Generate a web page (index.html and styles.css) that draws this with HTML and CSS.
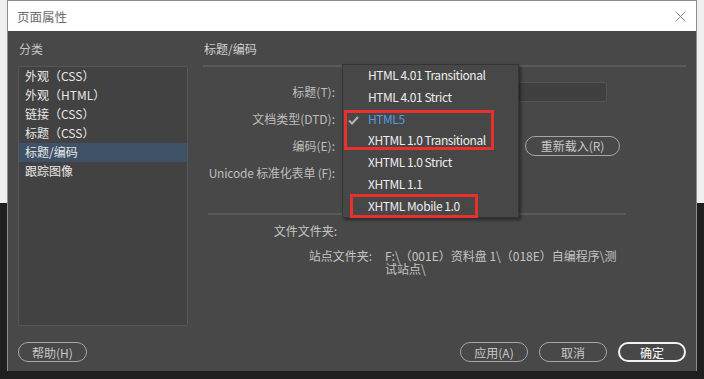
FILE: index.html
```html
<!DOCTYPE html>
<html lang="zh-CN">
<head>
    <meta charset="UTF-8">
    <title>页面属性</title>
    <link rel="stylesheet" href="styles.css">
</head>
<body>
    <div class="window">
        <div class="titlebar">
            <span>页面属性</span>
            <svg class="close" width="11" height="11" viewBox="0 0 11 11">
                <path d="M0.5 0.5 L10.5 10.5 M10.5 0.5 L0.5 10.5" stroke="#8a8a8a" stroke-width="1" fill="none"/>
            </svg>
        </div>

        <div class="dialog-body">
            <div class="main">
                <div class="category-col">
                    <div class="section-label">分类</div>
                    <ul class="category-list">
                        <li>外观（CSS）</li>
                        <li>外观（HTML）</li>
                        <li>链接（CSS）</li>
                        <li>标题（CSS）</li>
                        <li class="selected">标题/编码</li>
                        <li>跟踪图像</li>
                    </ul>
                </div>

                <div class="panel">
                    <div class="section-label header">标题/编码</div>
                    <div class="rule"></div>

                    <div class="form-grid">
                        <label>标题(T):</label>
                        <div class="field"><div class="textbox wide"></div></div>

                        <label>文档类型(DTD):</label>
                        <div class="field"><div class="textbox"></div></div>

                        <label>编码(E):</label>
                        <div class="field">
                            <div class="textbox"></div>
                            <button class="pill">重新载入(R)</button>
                        </div>

                        <label class="latin">Unicode 标准化表单 (F):</label>
                        <div class="field"><div class="textbox"></div></div>
                    </div>

                    <div class="rule short"></div>

                    <div class="info-row first">
                        <span class="info-label">文件文件夹:</span>
                    </div>
                    <div class="info-row second">
                        <span class="info-label">站点文件夹:</span>
                        <span class="info-value">F:\（001E）资料盘 1\（018E）自编程序\测试站点\</span>
                    </div>

                    <div class="dropdown">
                        <div class="dd-item">HTML 4.01 Transitional</div>
                        <div class="dd-item">HTML 4.01 Strict</div>
                        <div class="dd-item active">
                            <svg class="check" width="11" height="9" viewBox="0 0 11 9">
                                <path d="M1 4.5 L4 7.5 L10 1" stroke="#b4b4b4" stroke-width="2" fill="none"/>
                            </svg>
                            HTML5
                        </div>
                        <div class="dd-item">XHTML 1.0 Transitional</div>
                        <div class="dd-item">XHTML 1.0 Strict</div>
                        <div class="dd-item">XHTML 1.1</div>
                        <div class="dd-item">XHTML Mobile 1.0</div>
                        <div class="mark mark-a"></div>
                        <div class="mark mark-b"></div>
                    </div>
                </div>
            </div>

            <div class="footer">
                <button class="pill">帮助(H)</button>
                <div class="footer-right">
                    <button class="pill">应用(A)</button>
                    <button class="pill">取消</button>
                    <button class="pill primary">确定</button>
                </div>
            </div>
        </div>
    </div>
</body>
</html>
```

FILE: styles.css
```css
body {
    margin: 0;
    width: 704px;
    height: 379px;
    overflow: hidden;
    background: linear-gradient(#efefef 0, #efefef 203px, #1f1f1f 203px);
    font-family: "Noto Sans CJK SC", "Noto Sans", sans-serif;
    font-size: 12px;
}

.window {
    margin-left: 7px;
    width: 688px;
    height: 370px;
    border: 1px solid #8c8c8c;
    border-bottom: none;
    display: flex;
    flex-direction: column;
}

.titlebar {
    height: 30px;
    background: #fff;
    display: flex;
    align-items: center;
    justify-content: space-between;
    padding: 0 10px 0 9px;
    color: #6a6a6a;
    font-size: 12.5px;
}

.dialog-body {
    flex: 1;
    background: #484848;
    padding: 9px 10px 9px 10px;
    display: flex;
    flex-direction: column;
}

.main {
    flex: 1;
    display: grid;
    grid-template-columns: 170px 1fr;
    gap: 15px;
}

.section-label {
    line-height: 18px;
    color: #c4c4c4;
    padding-left: 1px;
}

.category-list {
    list-style: none;
    margin: 8px 0 0 0;
    padding: 0;
    height: 258px;
    border: 1px solid #565656;
    border-radius: 2px;
    background: #424242;
    color: #e8e8e8;
}

.category-list li {
    height: 19px;
    line-height: 17px;
    padding-left: 6px;
}

.category-list .selected {
    background: #3e5166;
}

.panel {
    position: relative;
}

.header {
    color: #d0d0d0;
}

.rule {
    height: 2px;
    background: #5a5a5a;
    margin-top: 7px;
}

.rule.short {
    margin: 27px 0 0 5px;
    width: 418px;
}

.form-grid {
    margin-top: 11px;
    display: grid;
    grid-template-columns: 132px 1fr;
    column-gap: 10px;
    grid-auto-rows: 27px;
    align-items: center;
}

.form-grid label {
    text-align: right;
    color: #bdbdbd;
}

.form-grid label.latin {
    letter-spacing: -0.2px;
}

.field {
    display: flex;
    align-items: center;
    gap: 10px;
}

.textbox {
    box-sizing: border-box;
    width: 170px;
    height: 20px;
    background: #404040;
    border: 1px solid #555;
    border-radius: 3px;
}

.textbox.wide {
    width: 262px;
}

.pill {
    height: 20px;
    padding: 0;
    border: 1px solid #a6a6a6;
    border-radius: 10px;
    background: transparent;
    color: #c8c8c8;
    font-family: "Noto Sans CJK SC", "Noto Sans", sans-serif;
    font-size: 12px;
    line-height: 17px;
}

.field .pill {
    width: 95px;
}

.info-row {
    display: flex;
    color: #c4c4c4;
    line-height: 14px;
}

.info-row.first {
    margin-top: 9px;
}

.info-row.second {
    margin-top: 11px;
}

.info-row.first .info-label {
    width: 134px;
    text-align: right;
}

.info-row.second .info-label {
    width: 169px;
    text-align: right;
}

.info-value {
    margin-left: 13px;
    width: 232px;
    line-height: 13px;
    word-break: break-all;
}

.dropdown {
    position: absolute;
    left: 139px;
    top: 24px;
    width: 175px;
    height: 152px;
    background: #474747;
    border: 1px solid #353535;
    box-shadow: 2px 2px 3px rgba(0, 0, 0, 0.45);
    letter-spacing: -0.45px;
}

.dd-item {
    position: relative;
    height: 21.8px;
    line-height: 20.8px;
    padding-left: 25px;
    color: #ededed;
}

.dd-item.active {
    color: #4f9be6;
}

.check {
    position: absolute;
    left: 5px;
    top: 7px;
}

.mark {
    position: absolute;
    border: 3px solid #e8302d;
}

.mark-a {
    left: 1px;
    top: 45px;
    width: 144px;
    height: 34px;
}

.mark-b {
    left: 7px;
    top: 129px;
    width: 122px;
    height: 18px;
}

.footer {
    display: flex;
    justify-content: space-between;
    align-items: center;
    margin-top: 15px;
}

.footer > .pill {
    width: 69px;
}

.footer-right {
    display: flex;
    gap: 11px;
}

.footer-right .pill {
    width: 68px;
}

.pill.primary {
    border: 2px solid #f2f2f2;
    color: #fff;
    line-height: 15px;
}
```
